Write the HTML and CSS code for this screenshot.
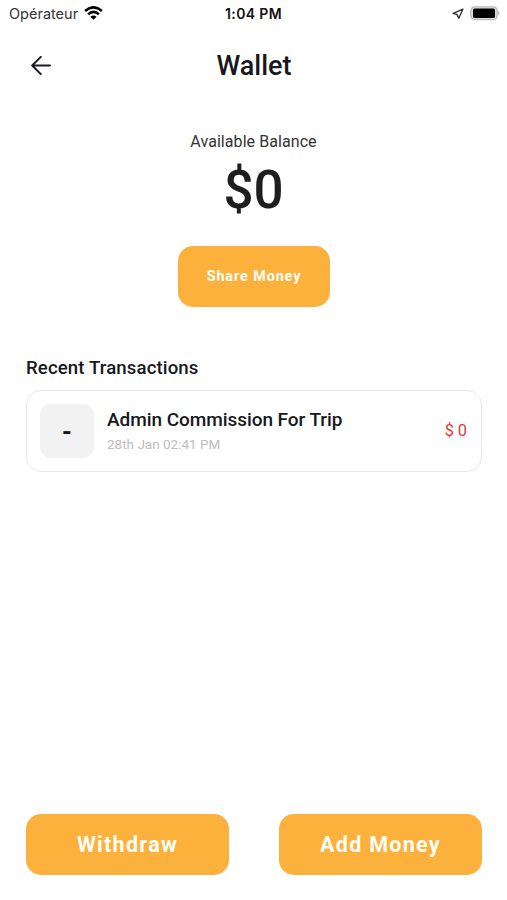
FILE: index.html
```html
<!DOCTYPE html>
<html lang="en">
<head>
<meta charset="utf-8">
<title>Wallet</title>
<link rel="stylesheet" href="styles.css">
</head>
<body>
<div class="screen">
  <div class="status">
    <div class="carrier">
      <span class="carrier-name">Opérateur</span>
      <svg class="wifi" width="19" height="14" viewBox="0 0 19 14" fill="none" stroke="#000" stroke-width="2.6">
        <path d="M1.1 4.9Q9.5 -2.3 17.9 4.9"/>
        <path d="M4.1 8.2Q9.5 3.5 14.9 8.2"/>
        <path d="M9.5 13.8L6.4 10.7Q9.5 8.1 12.6 10.7Z" fill="#000" stroke="none"/>
      </svg>
    </div>
    <span class="time">1:04 PM</span>
    <div class="indicators">
      <svg width="12" height="12" viewBox="0 0 12 12" fill="none" stroke="#333" stroke-width="1.4" stroke-linejoin="round"><path d="M10.9 1.2L1.2 5.4L5 6.5L6.8 10.2Z"/></svg>
      <svg class="battery" width="31" height="15" viewBox="0 0 31 15"><rect x=".8" y=".8" width="26.4" height="12.9" rx="4" fill="#ddd" stroke="#bbb" stroke-width="1.3"/><rect x="3" y="2.5" width="22" height="9.6" rx="1.5" fill="#000"/><path d="M28.3 4.8Q30.8 7.2 28.3 9.6Z" fill="#aaa"/></svg>
    </div>
  </div>
  <header class="header">
    <svg class="back" width="20" height="20" viewBox="0 0 20 20" fill="none" stroke="#1c1c20" stroke-width="2" stroke-linecap="round" stroke-linejoin="round"><path d="M19 9.5H1.2M9.8 .9L1.2 9.5L9.8 18.1"/></svg>
    <h1 class="title">Wallet</h1>
  </header>
  <section class="balance">
    <span class="balance-label">Available Balance</span>
    <span class="balance-value">$0</span>
    <button class="btn share"><span>Share Money</span></button>
  </section>
  <section class="recent">
    <h2 class="recent-title">Recent Transactions</h2>
    <div class="card">
      <div class="sign"><span>-</span></div>
      <div class="info">
        <span class="name">Admin Commission For Trip</span>
        <span class="date">28th Jan 02:41 PM</span>
      </div>
      <span class="amount">$ 0</span>
    </div>
  </section>
  <footer class="actions">
    <button class="btn wide"><span>Withdraw</span></button>
    <button class="btn wide"><span>Add Money</span></button>
  </footer>
</div>
</body>
</html>
```
FILE: styles.css
```css
* { box-sizing: border-box; }
body { margin: 0; background: #fff; font-family: Roboto, sans-serif; color: #17171d; }
.screen { width: 507px; height: 900px; display: flex; flex-direction: column; overflow: hidden; }
.status { height: 27px; padding: 0 6px 0 9px; display: grid; grid-template-columns: 1fr auto 1fr; align-items: center; font-family: Inter, sans-serif; color: #111; }
.carrier { display: flex; align-items: center; gap: 6px; }
.carrier-name { font-size: 14.5px; color: #333; }
.wifi { margin-top: -2px; }
.time { font-size: 14px; font-weight: 600; letter-spacing: .35px; margin-right: 3px; }
.indicators { display: flex; justify-content: flex-end; align-items: center; gap: 6px; }
.battery { margin-top: -1px; }
.header { height: 77px; padding: 0 30px 0 31px; display: grid; grid-template-columns: 1fr auto 1fr; align-items: center; }
.title { margin: 0; font-size: 27px; font-weight: 500; line-height: 30px; }
.balance { margin-top: 28px; display: flex; flex-direction: column; align-items: center; }
.balance-label { font-size: 16px; line-height: 20px; letter-spacing: .07px; color: #333; }
.balance-value { font-size: 53px; line-height: 64px; margin-top: 6px; font-weight: 500; color: #1e1e1e; }
.btn { height: 61px; padding: 0; border: 0; border-radius: 15px; background: #fcb13d; color: #fffdf5; font-family: inherit; font-weight: 700; display: flex; align-items: center; justify-content: center; }
.share { width: 152px; margin-top: 24px; padding-left: 1px; font-size: 14.4px; letter-spacing: .9px; }
.recent { margin: 49px 25px 0 26px; }
.recent-title { margin: 0; font-size: 18.6px; line-height: 24px; font-weight: 500; letter-spacing: .13px; }
.card { height: 82px; margin-top: 10px; padding: 0 14px 0 13px; border: 1.5px solid #e8e8e8; border-radius: 15px; display: flex; align-items: center; }
.sign { width: 54px; height: 54px; padding-top: 2px; border-radius: 11px; background: #f2f2f2; display: flex; align-items: center; justify-content: center; font-size: 25px; font-weight: 700; }
.info { margin: -2px 0 0 13px; display: flex; flex-direction: column; flex: 1; }
.name { font-size: 19px; line-height: 24px; font-weight: 500; letter-spacing: -.06px; }
.date { font-size: 13.5px; line-height: 18px; margin-top: 3px; color: #bdbdbd; }
.amount { font-size: 16.3px; margin-top: -2px; color: #e03a36; }
.actions { margin: auto 25px 25px 26px; display: flex; gap: 50px; }
.wide { flex: 1; padding-bottom: 1px; font-size: 21.5px; letter-spacing: 1.3px; }
```
